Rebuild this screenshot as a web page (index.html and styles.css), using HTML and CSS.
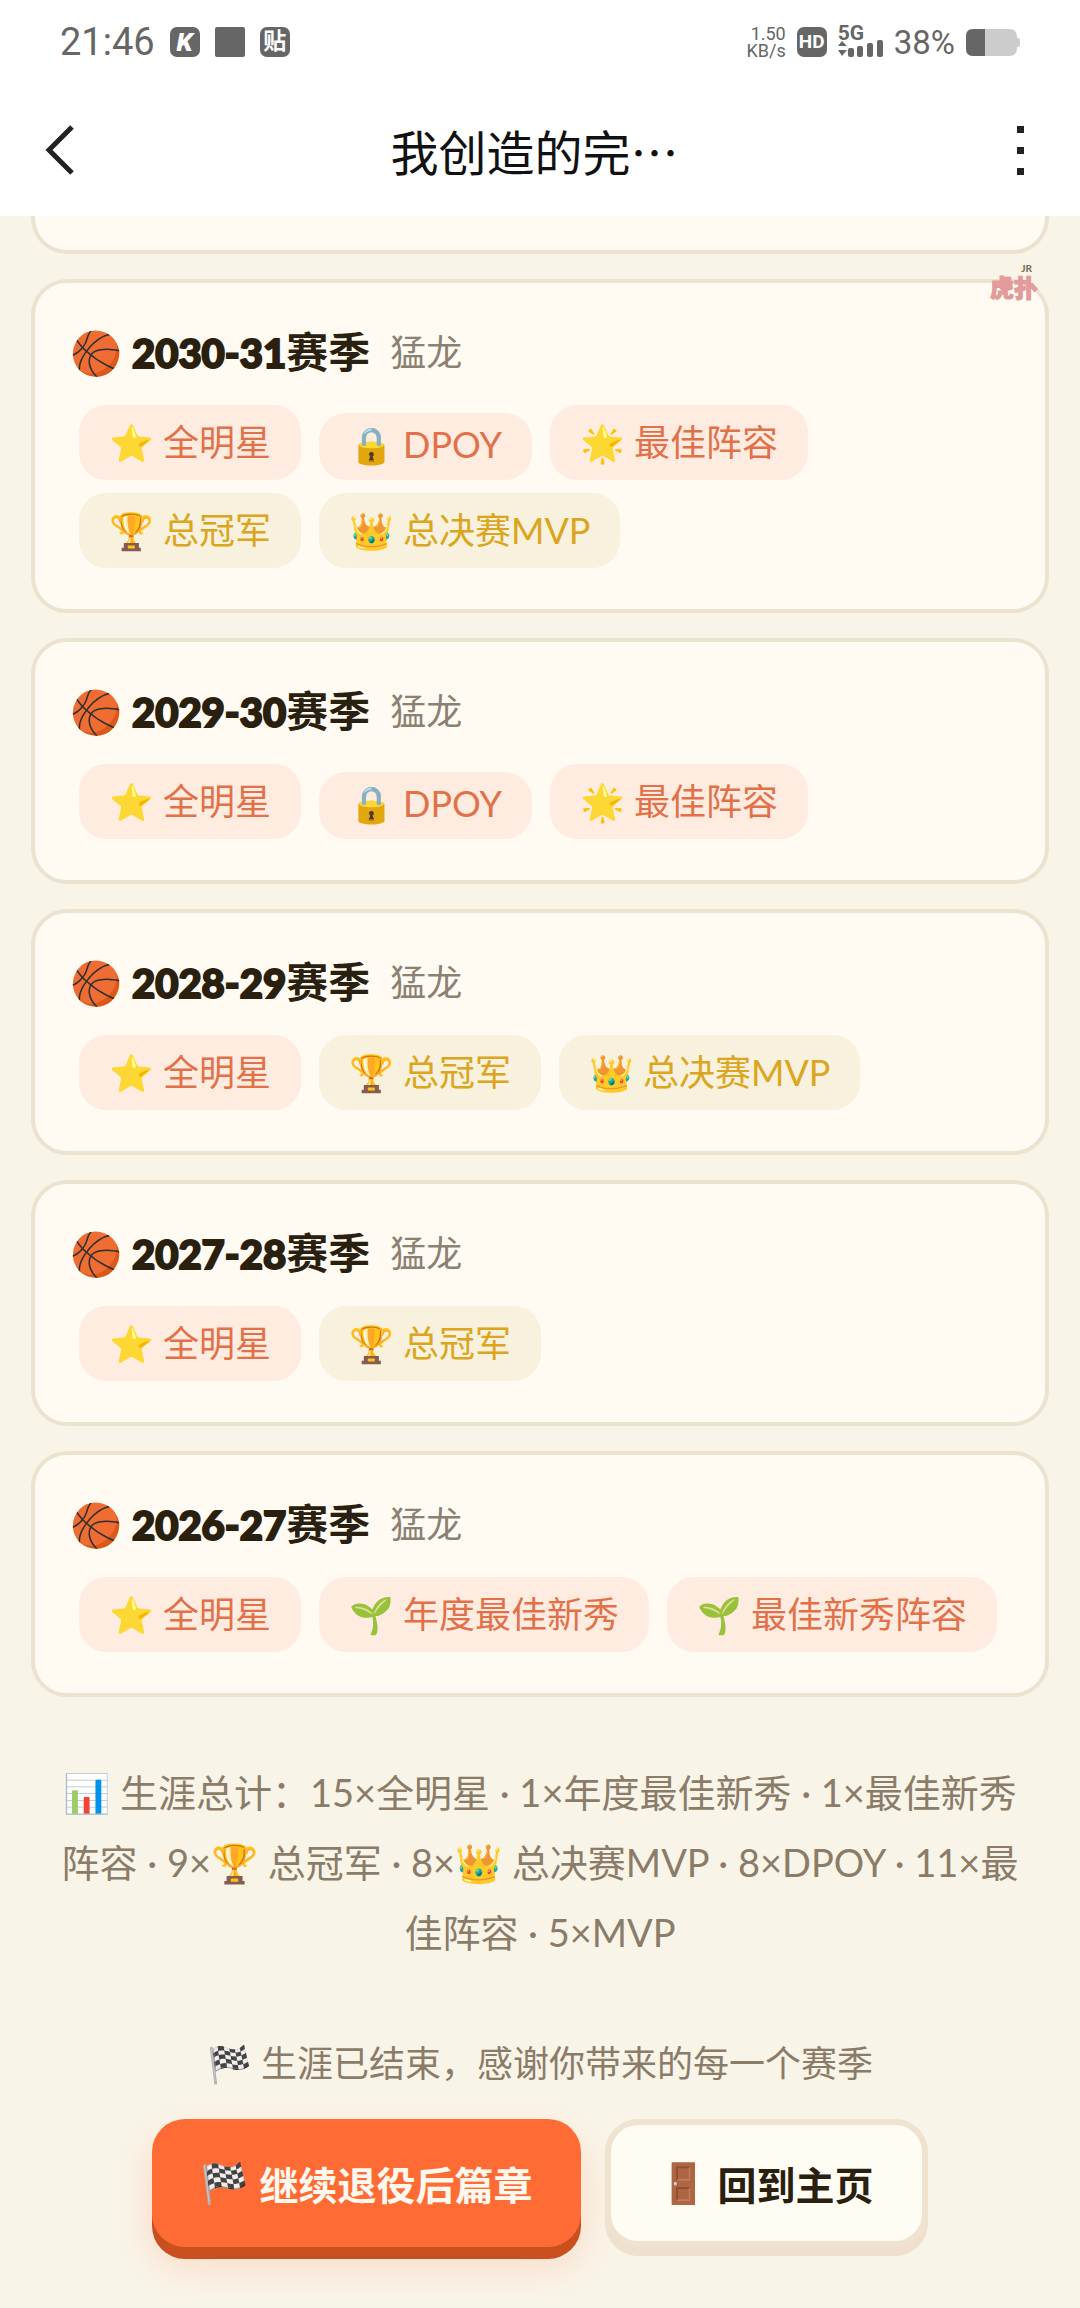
FILE: index.html
```html
<!DOCTYPE html>
<html lang="zh-CN">
<head>
    <meta charset="utf-8">
    <meta name="viewport" content="width=device-width, initial-scale=1">
    <title>我创造的完…</title>
    <link rel="stylesheet" href="styles.css">
</head>
<body>
    <header class="topbar">
        <div class="status">
            <div class="status-left">
                <span class="clock">21:46</span>
                <span class="app-icon app-k">K</span>
                <span class="app-icon app-blank"></span>
                <span class="app-icon">贴</span>
            </div>
            <div class="status-right">
                <span class="speed"><span>1.50</span><span>KB/s</span></span>
                <span class="app-icon app-hd">HD</span>
                <span class="network">
                    <span class="network-type">5G</span>
                    <svg class="signal" width="45" height="17" viewBox="0 0 45 17" aria-hidden="true">
                        <path d="M0 6 L4 1 L9 6 Z M0 10 L9 10 L4 16 Z"/>
                        <rect x="10" y="8" width="6" height="9" rx="2"/>
                        <rect x="19" y="6" width="6" height="11" rx="2"/>
                        <rect x="29" y="3" width="6" height="14" rx="2"/>
                        <rect x="39" y="0" width="6" height="17" rx="2"/>
                    </svg>
                </span>
                <span class="percent">38%</span>
                <svg class="battery" width="54" height="27" viewBox="0 0 54 27" aria-hidden="true">
                    <rect class="battery-body" x="0" y="0" width="51" height="27" rx="7"/>
                    <rect class="battery-body" x="49" y="9" width="5" height="9" rx="2"/>
                    <path class="battery-level" d="M7 0 H19 V27 H7 Q0 27 0 20 V7 Q0 0 7 0 Z"/>
                </svg>
            </div>
        </div>
        <div class="nav">
            <button class="nav-button" type="button" aria-label="返回">
                <svg width="30" height="50" viewBox="0 0 30 50"><path class="chevron" d="M27 2 L4 25 L27 48"/></svg>
            </button>
            <h1>我创造的完…</h1>
            <button class="nav-button nav-more" type="button" aria-label="更多">
                <svg width="7" height="49" viewBox="0 0 7 49"><path d="M0 0h7v7H0z M0 21h7v7H0z M0 42h7v7H0z"/></svg>
            </button>
        </div>
    </header>

    <main>
        <div class="watermark"><span class="watermark-tag">JR</span><span>虎扑</span></div>

        <section class="seasons">
            <article class="card card-cut"></article>

            <article class="card">
                <h2><span>🏀</span><span><b class="years">2030-31</b>赛季</span><small>猛龙</small></h2>
                <ul class="badges">
                    <li class="badge"><span>⭐</span>全明星</li>
                    <li class="badge badge-latin"><span>🔒</span>DPOY</li>
                    <li class="badge"><span>🌟</span>最佳阵容</li>
                    <li class="badge badge-gold"><span>🏆</span>总冠军</li>
                    <li class="badge badge-gold"><span>👑</span>总决赛MVP</li>
                </ul>
            </article>

            <article class="card">
                <h2><span>🏀</span><span><b class="years">2029-30</b>赛季</span><small>猛龙</small></h2>
                <ul class="badges">
                    <li class="badge"><span>⭐</span>全明星</li>
                    <li class="badge badge-latin"><span>🔒</span>DPOY</li>
                    <li class="badge"><span>🌟</span>最佳阵容</li>
                </ul>
            </article>

            <article class="card">
                <h2><span>🏀</span><span><b class="years">2028-29</b>赛季</span><small>猛龙</small></h2>
                <ul class="badges">
                    <li class="badge"><span>⭐</span>全明星</li>
                    <li class="badge badge-gold"><span>🏆</span>总冠军</li>
                    <li class="badge badge-gold"><span>👑</span>总决赛MVP</li>
                </ul>
            </article>

            <article class="card">
                <h2><span>🏀</span><span><b class="years">2027-28</b>赛季</span><small>猛龙</small></h2>
                <ul class="badges">
                    <li class="badge"><span>⭐</span>全明星</li>
                    <li class="badge badge-gold"><span>🏆</span>总冠军</li>
                </ul>
            </article>

            <article class="card">
                <h2><span>🏀</span><span><b class="years">2026-27</b>赛季</span><small>猛龙</small></h2>
                <ul class="badges">
                    <li class="badge"><span>⭐</span>全明星</li>
                    <li class="badge"><span>🌱</span>年度最佳新秀</li>
                    <li class="badge"><span>🌱</span>最佳新秀阵容</li>
                </ul>
            </article>
        </section>

        <p class="summary">📊 生涯总计：15×全明星 · 1×年度最佳新秀 · 1×最佳新秀阵容 · 9×🏆 总冠军 · 8×👑 总决赛MVP · 8×DPOY · 11×最佳阵容 · 5×MVP</p>

        <p class="ending">🏁 生涯已结束，感谢你带来的每一个赛季</p>

        <div class="actions">
            <button class="button button-primary" type="button"><span>🏁</span>继续退役后篇章</button>
            <button class="button button-plain" type="button"><span>🚪</span>回到主页</button>
        </div>
    </main>
</body>
</html>
```
FILE: styles.css
```css
* {
    box-sizing: border-box;
}

body, h1, h2, p, ul {
    margin: 0;
    padding: 0;
}

body {
    background: #f9f4e8;
    color: #2a2010;
    font-family: Lato, "Noto Sans CJK SC", sans-serif;
    font-size: 36px;
}

button {
    border: 0;
    cursor: pointer;
    font-family: inherit;
}

/* top bar */

.topbar {
    height: 216px;
    background: #fff;
}

.status {
    display: flex;
    justify-content: space-between;
    height: 84px;
    padding: 0 60px;
    color: #666;
    font-family: Roboto, "Noto Sans CJK SC", sans-serif;
}

.status-left, .status-right {
    display: flex;
    align-items: center;
}

.status-left {
    gap: 15px;
}

.status-right {
    gap: 11px;
}

.clock {
    font-size: 38px;
}

.app-icon {
    width: 30px;
    height: 30px;
    border-radius: 7px;
    background: #666;
    color: #fff;
    font-size: 23px;
    font-weight: bold;
    line-height: 30px;
    text-align: center;
}

.app-k {
    font-size: 26px;
    font-style: italic;
    font-weight: 900;
}

.app-blank {
    border-radius: 2px;
}

.app-hd {
    font-size: 19px;
}

.speed {
    display: flex;
    flex-direction: column;
    align-items: flex-end;
    font-size: 18px;
    line-height: 17px;
}

.network {
    display: flex;
    flex-direction: column;
    height: 30px;
}

.network-type {
    font-size: 21px;
    font-weight: bold;
    line-height: 13px;
}

.signal {
    fill: #666;
}

.percent {
    font-size: 33px;
}

.battery-body {
    fill: #ccc;
}

.battery-level {
    fill: #666;
}

.nav {
    display: flex;
    align-items: center;
    justify-content: space-between;
    height: 132px;
    padding: 0 56px 0 45px;
}

.nav h1 {
    color: #111;
    font-family: "Noto Sans CJK SC", sans-serif;
    font-size: 48px;
    font-weight: normal;
    line-height: 72px;
}

.nav-button {
    display: flex;
    align-items: center;
    width: 48px;
    height: 96px;
    padding: 0;
    background: none;
    fill: #222;
}

.nav-more {
    justify-content: flex-end;
}

.chevron {
    fill: none;
    stroke: #222;
    stroke-width: 5;
}

/* seasons */

main {
    position: relative;
    padding: 0 31px;
}

.watermark {
    position: absolute;
    top: 46px;
    right: 42px;
    display: flex;
    flex-direction: column;
    color: #e29a9a;
    font-size: 24px;
    font-weight: 900;
    line-height: 28px;
    -webkit-text-stroke: 1px #e29a9a;
}

.watermark-tag {
    align-self: flex-end;
    padding-right: 6px;
    color: #77715f;
    font-size: 10px;
    line-height: 12px;
    -webkit-text-stroke: 0;
}

.seasons {
    display: flex;
    flex-direction: column;
    gap: 25px;
}

.card {
    padding: 35px 35px 41px;
    border: 4px solid #ece2d0;
    border-radius: 36px;
    background: #fffbf3;
}

.card-cut {
    height: 38px;
    padding: 0;
    border-top: 0;
    border-radius: 0 0 36px 36px;
}

.card h2 {
    display: flex;
    align-items: center;
    gap: 10px;
    height: 68px;
    margin-bottom: 19px;
    font-size: 42px;
    line-height: 68px;
}

.card small {
    margin-left: 10px;
    color: #8a8172;
    font-size: 36px;
    font-weight: normal;
}

.years {
    font-size: 40px;
    font-weight: 900;
    -webkit-text-stroke: 2px #2a2010;
}

.badges {
    display: flex;
    flex-wrap: wrap;
    align-items: flex-end;
    gap: 13px 18px;
    padding: 0 9px;
    list-style: none;
}

.badge {
    display: flex;
    gap: 9px;
    padding: 0 30px;
    border-radius: 27px;
    background: #ffece0;
    color: #e2714a;
    line-height: 75px;
}

.badge-latin {
    padding-bottom: 4px;
    line-height: 63px;
}

.badge-gold {
    background: #f8f1de;
    color: #dba520;
}

/* career total */

.summary {
    padding: 60px 25px 0;
    color: #8a7c68;
    font-size: 38px;
    line-height: 70px;
    text-align: center;
}

.ending {
    padding-top: 66px;
    color: #8a7c68;
    line-height: 60px;
    text-align: center;
}

.actions {
    display: flex;
    justify-content: center;
    gap: 24px;
    padding: 26px 0 48px;
}

.button {
    display: flex;
    align-items: center;
    gap: 10px;
    height: 128px;
    padding: 0 48px;
    border-radius: 33px;
    font-size: 39px;
    font-weight: bold;
}

.button-primary {
    background: #ff6b35;
    box-shadow: 0 12px 0 #c94f1f, 0 18px 36px rgba(255, 107, 53, 0.2);
    color: #fff8ee;
}

.button-plain {
    border: 6px solid #efe3cf;
    background: #fffcf3;
    box-shadow: 0 9px 0 #efe0ce;
    color: #2a2010;
}
```
